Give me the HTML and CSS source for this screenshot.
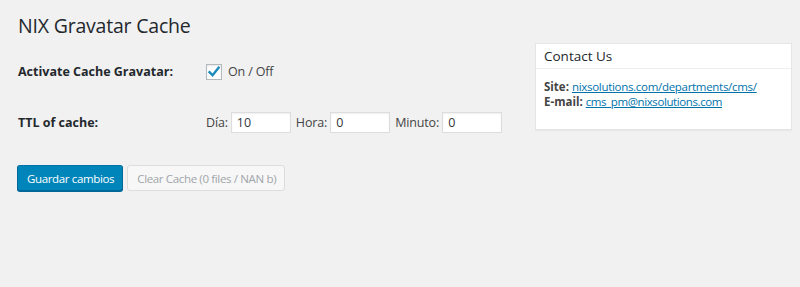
FILE: index.html
```html
<!DOCTYPE html>
<html>
<head>
<meta charset="utf-8">
<link rel="stylesheet" href="styles.css">
</head>
<body>
<div class="wrap">
  <div class="main">
    <h1 class="title">NIX Gravatar Cache</h1>
    <div class="form">
      <div class="label">Activate Cache Gravatar:</div>
      <div class="field">
        <span class="check"><svg width="14" height="14" viewBox="0 0 14 14"><path d="M2.5 7.2 L5.6 10.3 L11.6 2.6" fill="none" stroke="#1e8cbe" stroke-width="2.4" stroke-linecap="square"/></svg></span>
        <span class="text">On / Off</span>
      </div>
      <div class="label">TTL of cache:</div>
      <div class="field">
        <span class="text">Día:</span><span class="input">10</span>
        <span class="text">Hora:</span><span class="input">0</span>
        <span class="text">Minuto:</span><span class="input">0</span>
      </div>
    </div>
    <div class="buttons">
      <span class="btn primary">Guardar cambios</span>
      <span class="btn disabled">Clear Cache (0 files / NAN b)</span>
    </div>
  </div>
  <div class="sidebar">
    <div class="box">
      <div class="box-head">Contact Us</div>
      <div class="box-body">
        <div class="line"><b>Site:</b> <a href="#" class="site">nixsolutions.com/departments/cms/</a></div>
        <div class="line"><b>E-mail:</b> <a href="#" class="mail">cms_pm@nixsolutions.com</a></div>
      </div>
    </div>
  </div>
</div>
</body>
</html>
```

FILE: styles.css
```css
html, body {
  margin: 0;
  padding: 0;
  background: #f1f1f1;
}
body {
  font-family: "Open Sans", "Noto Sans", sans-serif;
  font-size: 12.5px;
  color: #444;
  height: 287px;
  overflow: hidden;
}
.wrap {
  display: flex;
  padding: 0 8px 0 18px;
}
.main {
  flex: 1;
}
.title {
  margin: 12px 0 0 0;
  font-size: 19.5px;
  font-weight: 400;
  color: #23282d;
  line-height: 28px;
  letter-spacing: -0.2px;
}
.form {
  display: grid;
  grid-template-columns: 188px 1fr;
  grid-auto-rows: 51px;
  margin-top: 6px;
}
.label {
  display: flex;
  align-items: center;
  font-weight: 700;
  color: #23282d;
}
.field {
  display: flex;
  align-items: center;
}
.check {
  width: 14px;
  height: 14px;
  border: 1px solid #b4b9be;
  background: #fff;
  box-shadow: inset 0 1px 2px rgba(0,0,0,0.1);
  display: inline-flex;
  margin-right: 6px;
}
.text {
  color: #444;
  letter-spacing: -0.15px;
}
.input {
  width: 49px;
  height: 19px;
  border: 1px solid #ddd;
  background: #fff;
  box-shadow: inset 0 1px 2px rgba(0,0,0,0.07);
  color: #32373c;
  display: inline-flex;
  align-items: center;
  padding: 0 4px 0 5px;
  margin: 0 5px 0 3px;
}
.buttons {
  display: flex;
  gap: 4px;
  margin-top: 17px;
  margin-left: -1px;
}
.btn {
  display: inline-flex;
  align-items: center;
  height: 24px;
  padding: 0 8px 0 9px;
  border: 1px solid;
  border-radius: 3px;
  font-size: 11.5px;
  letter-spacing: -0.35px;
}
.primary {
  background: #0085ba;
  border-color: #0073aa #006799 #006799;
  box-shadow: 0 1px 0 #006799;
  color: #fff;
}
.disabled {
  background: #f7f7f7;
  border-color: #ddd;
  color: #a0a5aa;
}
.sidebar {
  width: 257px;
  margin-top: 43px;
}
.box {
  background: #fff;
  border: 1px solid #e5e5e5;
  box-shadow: 0 1px 1px rgba(0,0,0,0.04);
}
.box-head {
  height: 24px;
  border-bottom: 1px solid #eee;
  padding-left: 8px;
  display: flex;
  align-items: center;
  font-size: 13.5px;
  color: #23282d;
}
.box-body {
  padding: 10px 8px 20px 8px;
  font-size: 11.5px;
}
.line {
  line-height: 16px;
  height: 15px;
  overflow: visible;
}
.box-body b {
  color: #444;
}
.box-body a {
  color: #0073aa;
  text-decoration: underline;
}
.box-body a.site {
  letter-spacing: -0.3px;
}
.box-body a.mail {
  letter-spacing: -0.4px;
}
```
